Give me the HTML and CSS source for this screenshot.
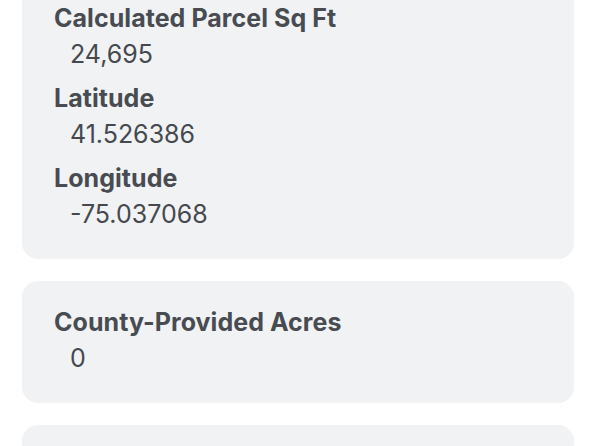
FILE: index.html
```html
<!DOCTYPE html>
<html lang="en">
<head>
<meta charset="utf-8">
<title>Parcel details</title>
<link rel="stylesheet" href="styles.css">
</head>
<body>
<main class="list">
  <section class="card">
    <div class="field">
      <div class="label">Calculated Parcel Sq Ft</div>
      <div class="value">24,695</div>
    </div>
    <div class="field">
      <div class="label">Latitude</div>
      <div class="value">41.526386</div>
    </div>
    <div class="field">
      <div class="label">Longitude</div>
      <div class="value">-75.037068</div>
    </div>
  </section>
  <section class="card">
    <div class="field">
      <div class="label">County-Provided Acres</div>
      <div class="value">0</div>
    </div>
  </section>
  <section class="card card-tall">
    <div class="field">
      <div class="label">&nbsp;</div>
      <div class="value">&nbsp;</div>
    </div>
  </section>
</main>
</body>
</html>
```
FILE: styles.css
```css
html, body {
  margin: 0;
  padding: 0;
  background: #ffffff;
}
body {
  font-family: Inter, "Noto Sans", sans-serif;
  color: #46494e;
  overflow: hidden;
}
.list {
  display: flex;
  flex-direction: column;
  gap: 22px;
  padding: 0 22px;
  margin-top: -23px;
}
.card {
  background: #f0f2f4;
  border-radius: 16px;
  padding: 25px 32px 29px;
  display: flex;
  flex-direction: column;
  gap: 12px;
}
.field {
  display: flex;
  flex-direction: column;
  gap: 4px;
}
.label {
  font-size: 25px;
  line-height: 32px;
  font-weight: 700;
  letter-spacing: 0.05px;
  color: #484c51;
}
.value {
  font-size: 25px;
  line-height: 32px;
  font-weight: 400;
  color: #45494e;
  padding-left: 16px;
}
```
